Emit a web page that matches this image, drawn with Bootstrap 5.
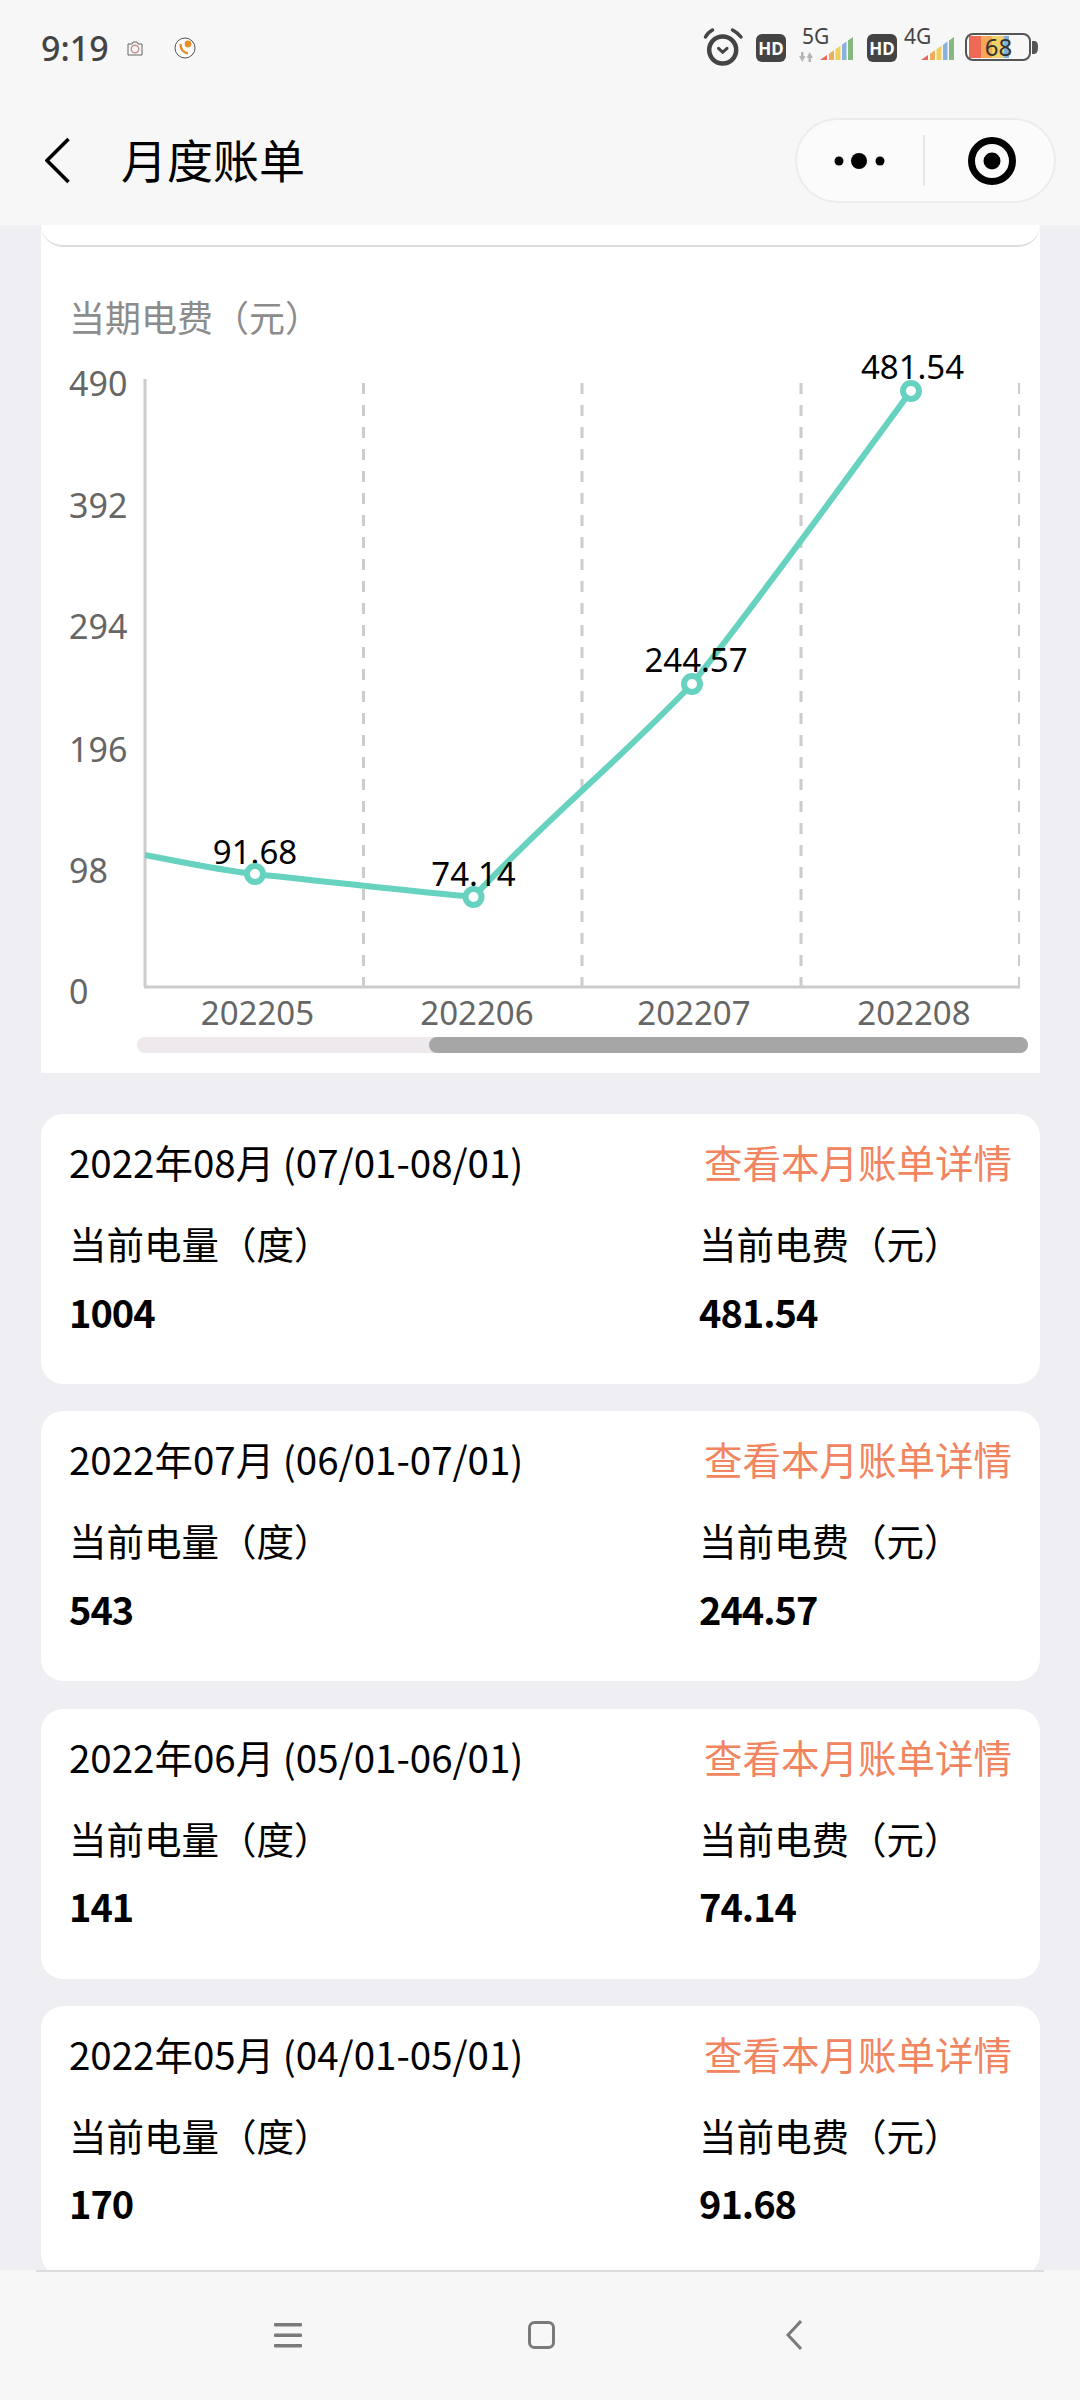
<!DOCTYPE html>
<html lang="zh-CN">
<head>
  <meta charset="UTF-8"/>
  <meta name="viewport" content="width=device-width, initial-scale=1.0"/>
  <title>月度账单</title>
  <link href="https://cdn.jsdelivr.net/npm/bootstrap@5.3.0/dist/css/bootstrap.min.css" rel="stylesheet">
  <style>
    html, body {
      height: 2400px;
      margin: 0;
      overflow: hidden;
      background-color: #eeeef3;
      font-family: "Noto Sans", "Noto Sans CJK SC", sans-serif;
    }
    .page-wrap { width: 1080px; height: 2400px; }
    .top-area { background-color: #f7f7f8; height: 225px; }
    .status-row { height: 96px; padding-left: 41px; padding-right: 35px; }
    .status-time { font-size: 34px; font-weight: 500; color: #444; line-height: 1; width: 86px; }
    .phone-icon { margin-left: 31px; }
    .title-row { height: 129px; padding-left: 45px; padding-right: 24px; }
    .page-title { font-family: "Noto Sans CJK SC", sans-serif; font-size: 46px; color: #000; margin: 0 0 5px 51px; line-height: 1; font-weight: 400; }
    .capsule { width: 261px; height: 85px; background-color: #fbfbfb; border: 2px solid #ececec; }
    .capsule-split { width: 2px; height: 51px; background-color: #e6e6e6; }
    .capsule-right { padding-left: 5px; }
    .main-area { padding-left: 41px; padding-right: 40px; min-height: 0; }
    .chart-box { background-color: #fff; height: 848px; }
    .stub-card { height: 22px; border-bottom: 2px solid #dcdcdc; border-radius: 0 0 22px 22px; }
    .chart-title { font-family: "Noto Sans CJK SC", sans-serif; font-size: 36px; color: #8c8c8c; line-height: 48px; padding: 45px 0 0 28px; height: 93px; }
    .chart-svg { display: block; }
    .chart-svg text { font-family: "Noto Sans", sans-serif; font-size: 33px; }
    .chart-svg text.axis-label { fill: #666; font-size: 34px; }
    .chart-svg text.month-label { fill: #666; font-size: 33px; }
    .point-label { fill: #000; }
    .scroll-track { margin: 0 12px 0 96px; height: 16px; background-color: #ede9ec; border-radius: 8px; }
    .scroll-thumb { width: 599px; height: 16px; background-color: #a6a6a6; border-radius: 8px; }
    .bill-list { margin-top: 41px; gap: 27.3px; }
    .bill-card { background-color: #fff; border-radius: 22px; padding: 23px 28px 48.500px 28px; flex-shrink: 0; font-family: "Noto Sans CJK SC", sans-serif; color: #000; }
    .bill-title { font-size: 38.500px; line-height: 48px; }
    .bill-link { font-size: 38.500px; line-height: 48px; color: #f0855f; text-decoration: none; }
    .bill-cols { margin-top: 34px; }
    .bill-left { width: 630px; }
    .bill-label { font-size: 37.500px; line-height: 48px; }
    .bill-value { font-size: 38px; line-height: 48px; font-weight: 700; margin-top: 20.500px; letter-spacing: -1px; }
    .bottom-nav { height: 130px; background-color: #f7f7f7; flex-shrink: 0; }
    .nav-rule { height: 2px; margin: 0 36px; background-color: #dcdcdf; }
    .nav-icons { padding: 0 0 2px 2px; }
    .nav-cell { width: 253px; }
    .status-svg { flex-shrink: 0; }
    .status-svg text { font-family: "Noto Sans", sans-serif; }
  </style>
</head>
<body>
  <div class="page-wrap d-flex flex-column">

    <div class="top-area flex-shrink-0">
      <div class="status-row d-flex align-items-center">
        <span class="status-time">9:19</span>
        <svg width="16" height="15" viewBox="0 0 16 15" fill="none">
          <path d="M1 3h4l1-2h4l1 2h4v11H1z" stroke="#666" stroke-width="1"/>
          <circle cx="8" cy="8" r="3.800" stroke="#c98f8f" stroke-width="1.400"/>
        </svg>
        <svg class="phone-icon" width="22" height="22" viewBox="0 0 22 22" fill="none">
          <circle cx="11" cy="11" r="10" fill="#fff" stroke="#555" stroke-width="1"/>
          <circle cx="14" cy="7" r="3.400" fill="#e88f2c"/>
          <path d="M6.500 7c0 5 3 8.500 7.500 9.500" stroke="#e88f2c" stroke-width="2.400"/>
        </svg>
        <svg class="status-svg ms-auto" width="345" height="64" viewBox="700 16 345 64">
          <defs>
            <g id="hdIcon">
              <rect x="756" y="34" width="30" height="28" rx="6" fill="#444"/>
              <text x="771" y="54.500" text-anchor="middle" font-size="17" font-weight="700" fill="#fff">HD</text>
            </g>
            <g id="signalBars">
              <polygon points="820,60 827,55 827,60" fill="#e8685f"/>
              <polygon points="829,60 829,53.700 834,50.200 834,60" fill="#f2ad5b"/>
              <polygon points="835.500,60 835.500,49.200 840.500,45.700 840.500,60" fill="#f0cf5c"/>
              <polygon points="842,60 842,44.700 846.500,41.500 846.500,60" fill="#86b2dd"/>
              <polygon points="848,60 848,40.500 853,37 853,60" fill="#84b87f"/>
            </g>
          </defs>
          <!-- alarm -->
          <g fill="none" stroke="#444" stroke-linecap="round">
            <circle cx="722.700" cy="50" r="13.500" stroke-width="4.500"/>
            <path d="M718.500 48.300l4.200 4 4.300-4" stroke-width="3"/>
            <path d="M705.500 37c1.500-3 4-5.500 7-7" stroke-width="3.500"/>
            <path d="M732.500 30c3 1.500 6 4 8.500 7" stroke-width="3.500"/>
          </g>
          <use href="#hdIcon"/>
          <text x="802" y="44" font-size="21" fill="#444">5G</text>
          <path d="M799 56h2v-4h2.500v4h2l-3.200 6zM808.500 62v-4h-2l3.200-6 3.300 6h-2v4z" fill="#b5b5b5"/>
          <use href="#signalBars"/>
          <use href="#hdIcon" x="111"/>
          <text x="904" y="44" font-size="21" fill="#444">4G</text>
          <use href="#signalBars" x="101"/>
          <!-- battery -->
          <rect x="969" y="36" width="12" height="22" fill="#ef6a55"/>
          <rect x="981" y="36" width="11" height="22" fill="#f5a855"/>
          <rect x="992" y="36" width="12" height="22" fill="#f2d168"/>
          <rect x="1004" y="36" width="5" height="22" fill="#7fb0dc"/>
          <rect x="966" y="34" width="64" height="26" rx="7" fill="none" stroke="#555" stroke-width="2"/>
          <text x="998.500" y="56" text-anchor="middle" font-size="24" fill="#333">68</text>
          <path d="M1032 41h2c3 0 4 2 4 6s-1 7-4 7h-2z" fill="#555"/>
        </svg>
      </div>
      <div class="title-row d-flex align-items-center">
        <svg width="25" height="47" viewBox="0 0 25 47" fill="none">
          <path d="M23.500 2L2 23.500 23.500 45" stroke="#000" stroke-width="3.600"/>
        </svg>
        <h1 class="page-title">月度账单</h1>
        <div class="capsule rounded-pill d-flex align-items-center ms-auto">
          <div class="flex-fill d-flex justify-content-center">
            <svg width="52" height="18" viewBox="0 0 52 18">
              <circle cx="5" cy="9" r="4.500" fill="#000"/>
              <circle cx="25" cy="9" r="8" fill="#000"/>
              <circle cx="46" cy="9" r="4.500" fill="#000"/>
            </svg>
          </div>
          <div class="capsule-split"></div>
          <div class="capsule-right flex-fill d-flex justify-content-center">
            <svg width="50" height="50" viewBox="0 0 50 50" fill="none">
              <circle cx="25" cy="25" r="20.500" stroke="#000" stroke-width="7"/>
              <circle cx="25" cy="25" r="8.500" fill="#000"/>
            </svg>
          </div>
        </div>
      </div>
    </div>

    <div class="main-area flex-grow-1 overflow-hidden">
      <div class="chart-box">
        <div class="stub-card"></div>
        <div class="chart-title">当期电费（元）</div>
        <svg class="chart-svg" width="999" height="697" viewBox="41 340 999 697">
          <line x1="145" y1="379" x2="145" y2="987" stroke="#ccc" stroke-width="3"/>
          <line x1="144" y1="987" x2="1020" y2="987" stroke="#ccc" stroke-width="3"/>
          <g stroke="#ccc" stroke-dasharray="11 11">
            <line x1="363.500" y1="383" x2="363.500" y2="987" stroke-width="3"/>
            <line x1="582" y1="383" x2="582" y2="987" stroke-width="3"/>
            <line x1="801" y1="383" x2="801" y2="987" stroke-width="3"/>
            <line x1="1019" y1="383" x2="1019" y2="987" stroke-width="2"/>
          </g>
          <text class="axis-label" x="69" y="396">490</text>
          <text class="axis-label" x="69" y="518">392</text>
          <text class="axis-label" x="69" y="639">294</text>
          <text class="axis-label" x="69" y="762">196</text>
          <text class="axis-label" x="69" y="883">98</text>
          <text class="axis-label" x="69" y="1004">0</text>
          <text class="month-label" x="257.500" y="1025" text-anchor="middle">202205</text>
          <text class="month-label" x="477" y="1025" text-anchor="middle">202206</text>
          <text class="month-label" x="694" y="1025" text-anchor="middle">202207</text>
          <text class="month-label" x="914" y="1025" text-anchor="middle">202208</text>
          <path d="M145 855C182 862 218 870 255 874C328 882 400 890 473.500 897C545 820 620 760 692 684C765 592 838 490 911 391" fill="none" stroke="#66d2bf" stroke-width="6"/>
          <text class="point-label" x="255" y="864" text-anchor="middle">91.68</text>
          <text class="point-label" x="473.500" y="886" text-anchor="middle">74.14</text>
          <text class="point-label" x="696" y="672" text-anchor="middle">244.57</text>
          <text class="point-label" x="912.500" y="379" text-anchor="middle">481.54</text>
          <g fill="#fff" stroke="#66d2bf" stroke-width="6">
            <circle cx="255" cy="874" r="8"/>
            <circle cx="473.500" cy="897" r="8"/>
            <circle cx="692" cy="684" r="8"/>
            <circle cx="911" cy="391" r="8"/>
          </g>
        </svg>
        <div class="scroll-track d-flex justify-content-end">
          <div class="scroll-thumb"></div>
        </div>
      </div>

      <div class="bill-list d-flex flex-column">
        <div class="bill-card">
          <div class="d-flex justify-content-between">
            <span class="bill-title">2022年08月 (07/01-08/01)</span>
            <a class="bill-link" href="#">查看本月账单详情</a>
          </div>
          <div class="bill-cols d-flex">
            <div class="bill-left"><div class="bill-label">当前电量（度）</div><div class="bill-value">1004</div></div>
            <div><div class="bill-label">当前电费（元）</div><div class="bill-value">481.54</div></div>
          </div>
        </div>
        <div class="bill-card">
          <div class="d-flex justify-content-between">
            <span class="bill-title">2022年07月 (06/01-07/01)</span>
            <a class="bill-link" href="#">查看本月账单详情</a>
          </div>
          <div class="bill-cols d-flex">
            <div class="bill-left"><div class="bill-label">当前电量（度）</div><div class="bill-value">543</div></div>
            <div><div class="bill-label">当前电费（元）</div><div class="bill-value">244.57</div></div>
          </div>
        </div>
        <div class="bill-card">
          <div class="d-flex justify-content-between">
            <span class="bill-title">2022年06月 (05/01-06/01)</span>
            <a class="bill-link" href="#">查看本月账单详情</a>
          </div>
          <div class="bill-cols d-flex">
            <div class="bill-left"><div class="bill-label">当前电量（度）</div><div class="bill-value">141</div></div>
            <div><div class="bill-label">当前电费（元）</div><div class="bill-value">74.14</div></div>
          </div>
        </div>
        <div class="bill-card">
          <div class="d-flex justify-content-between">
            <span class="bill-title">2022年05月 (04/01-05/01)</span>
            <a class="bill-link" href="#">查看本月账单详情</a>
          </div>
          <div class="bill-cols d-flex">
            <div class="bill-left"><div class="bill-label">当前电量（度）</div><div class="bill-value">170</div></div>
            <div><div class="bill-label">当前电费（元）</div><div class="bill-value">91.68</div></div>
          </div>
        </div>
      </div>
    </div>

    <div class="bottom-nav d-flex flex-column">
      <div class="nav-rule"></div>
      <div class="nav-icons flex-grow-1 d-flex justify-content-center align-items-center">
        <div class="nav-cell d-flex justify-content-center">
          <svg width="28" height="26" viewBox="0 0 28 26" fill="#7a7a7a">
            <rect y="1" width="28" height="3.500" rx="1"/>
            <rect y="11.500" width="28" height="3.500" rx="1"/>
            <rect y="22" width="28" height="3.500" rx="1"/>
          </svg>
        </div>
        <div class="nav-cell d-flex justify-content-center">
          <svg width="27" height="28" viewBox="0 0 27 28" fill="none">
            <rect x="1.500" y="1.500" width="24" height="25" rx="5" stroke="#7a7a7a" stroke-width="3"/>
          </svg>
        </div>
        <div class="nav-cell d-flex justify-content-center">
          <svg width="16" height="30" viewBox="0 0 16 30" fill="none">
            <path d="M15 1L2 15l13 14" stroke="#7a7a7a" stroke-width="3"/>
          </svg>
        </div>
      </div>
    </div>

  </div>
  <script src="https://cdn.jsdelivr.net/npm/bootstrap@5.3.0/dist/js/bootstrap.bundle.min.js"></script>
</body>
</html>
